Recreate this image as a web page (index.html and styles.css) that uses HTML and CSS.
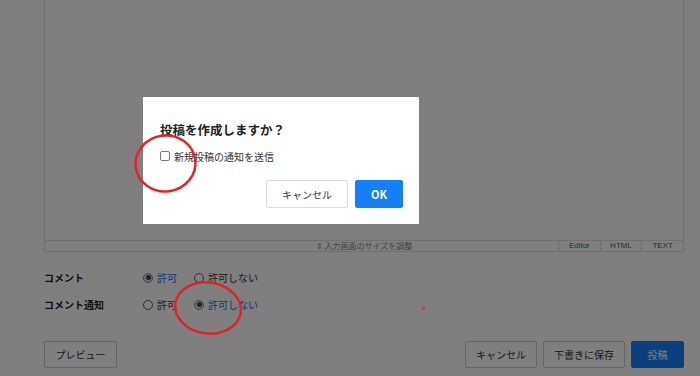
FILE: index.html
```html
<!DOCTYPE html>
<html lang="ja">
<head>
    <meta charset="UTF-8">
    <meta name="viewport" content="width=device-width, initial-scale=1.0">
    <title>投稿の作成</title>
    <link rel="stylesheet" href="styles.css">
</head>
<body>

    <div class="page">
        <div class="editor">
            <div class="editor-body"></div>
            <div class="editor-foot">
                <div class="spacer"></div>
                <div class="resize">&#8661; 入力画面のサイズを調整</div>
                <div class="tabs">
                    <span class="tab active">Editor</span>
                    <span class="tab">HTML</span>
                    <span class="tab">TEXT</span>
                </div>
            </div>
        </div>

        <div class="settings">
            <div class="row">
                <div class="label">コメント</div>
                <label class="radio checked"><span class="dot"></span>許可</label>
                <label class="radio"><span class="dot"></span>許可しない</label>
            </div>
            <div class="row">
                <div class="label">コメント通知</div>
                <label class="radio"><span class="dot"></span>許可</label>
                <label class="radio checked"><span class="dot"></span>許可しない</label>
            </div>
        </div>

        <div class="actions">
            <button class="btn">プレビュー</button>
            <div class="actions-right">
                <button class="btn">キャンセル</button>
                <button class="btn">下書きに保存</button>
                <button class="btn primary">投稿</button>
            </div>
        </div>
    </div>

    <!-- Dimmed backdrop + confirm dialog -->
    <div class="overlay"></div>
    <div class="modal">
        <div class="modal-title">投稿を作成しますか？</div>
        <label class="check"><span class="box"></span>新規投稿の通知を送信</label>
        <div class="modal-buttons">
            <button class="btn cancel">キャンセル</button>
            <button class="btn ok">OK</button>
        </div>
    </div>

    <!-- Red annotation marks -->
    <svg class="marks" width="700" height="376" viewBox="0 0 700 376">
        <ellipse cx="165.5" cy="163.5" rx="30" ry="28" fill="none" stroke="#e3232b" stroke-width="2.5" transform="rotate(-8 165.5 163.5)"/>
        <ellipse cx="208" cy="308" rx="33" ry="25.5" fill="none" stroke="#e3232b" stroke-width="2.5" transform="rotate(8 208 308)"/>
        <rect x="422" y="307" width="3" height="3" fill="#e8323c"/>
    </svg>

</body>
</html>
```

FILE: styles.css
```css
* {
    margin: 0;
    padding: 0;
    box-sizing: border-box;
}

body {
    width: 700px;
    height: 376px;
    overflow: hidden;
    background-color: #fff;
    font-family: "Noto Sans CJK JP", "Noto Sans", sans-serif;
    color: #333;
}

.page {
    padding-left: 44px;
    width: 684px;
}

/* Editor */
.editor {
    border-left: 1px solid #e0e0e0;
    border-right: 1px solid #e0e0e0;
    border-bottom: 1px solid #e0e0e0;
}

.editor-body {
    height: 241px;
    border-bottom: 1px solid #e0e0e0;
}

.editor-foot {
    display: grid;
    grid-template-columns: 125px 1fr 125px;
    height: 10px;
    font-size: 8px;
    line-height: 10px;
    color: #888;
}

.resize {
    text-align: center;
    white-space: nowrap;
}

.tabs {
    display: flex;
}

.tab {
    flex: 1;
    text-align: center;
    border-left: 1px solid #e0e0e0;
    color: #555;
    font-family: "Liberation Sans", sans-serif;
}

/* Comment settings */
.settings {
    margin-top: 12px;
}

.row {
    display: flex;
    align-items: center;
    height: 27px;
    font-size: 10px;
}

.label {
    width: 99px;
    font-weight: bold;
    color: #222;
}

.radio {
    display: flex;
    align-items: center;
    gap: 4px;
    white-space: nowrap;
    color: #333;
}

.radio:nth-of-type(1) {
    width: 51px;
}

.radio .dot {
    width: 10px;
    height: 10px;
    border: 1px solid #666;
    border-radius: 50%;
    display: flex;
    align-items: center;
    justify-content: center;
}

.radio.checked {
    color: #1a6fe0;
}

.radio.checked .dot {
    border-color: #888;
    background-color: #ddd;
}

.radio.checked .dot::after {
    content: "";
    width: 5px;
    height: 5px;
    border-radius: 50%;
    background-color: #444;
}

/* Bottom buttons */
.actions {
    display: flex;
    justify-content: space-between;
    margin-top: 23px;
}

.actions-right {
    display: flex;
    gap: 6px;
}

.btn {
    font-family: inherit;
    font-size: 10px;
    height: 27px;
    padding: 0;
    white-space: nowrap;
    background-color: #fff;
    color: #333;
    border: 1px solid #ccc;
    border-radius: 2px;
}

.actions .btn:first-child {
    width: 73px;
}

.actions-right .btn:nth-child(1) {
    width: 72px;
}

.actions-right .btn:nth-child(2) {
    width: 82px;
}

.btn.primary {
    width: 53px;
    background-color: #1580fb;
    border-color: #1580fb;
    color: #fff;
}

/* Overlay + modal */
.overlay {
    position: fixed;
    top: 0;
    left: 0;
    right: 0;
    bottom: 0;
    background-color: rgba(0, 0, 0, 0.5);
}

.modal {
    position: absolute;
    top: 97px;
    left: 143px;
    width: 276px;
    height: 127px;
    padding: 24px 16px 16px 17px;
    background-color: #fff;
}

.modal-title {
    font-size: 12.5px;
    line-height: 18px;
    font-weight: bold;
    color: #222;
}

.check {
    display: flex;
    align-items: center;
    gap: 4px;
    margin-top: 8px;
    height: 18px;
    font-size: 10px;
    color: #333;
}

.check .box {
    width: 10px;
    height: 10px;
    border: 1px solid #777;
    border-radius: 2px;
}

.modal-buttons {
    display: flex;
    justify-content: flex-end;
    gap: 7px;
    margin-top: 15px;
}

.modal-buttons .btn {
    height: 28px;
}

.btn.cancel {
    width: 82px;
    border-color: #ddd;
}

.btn.ok {
    width: 48px;
    font-size: 11px;
    font-weight: bold;
    background-color: #1580fb;
    border-color: #1580fb;
    color: #fff;
}

.marks {
    position: absolute;
    top: 0;
    left: 0;
    pointer-events: none;
}
```
